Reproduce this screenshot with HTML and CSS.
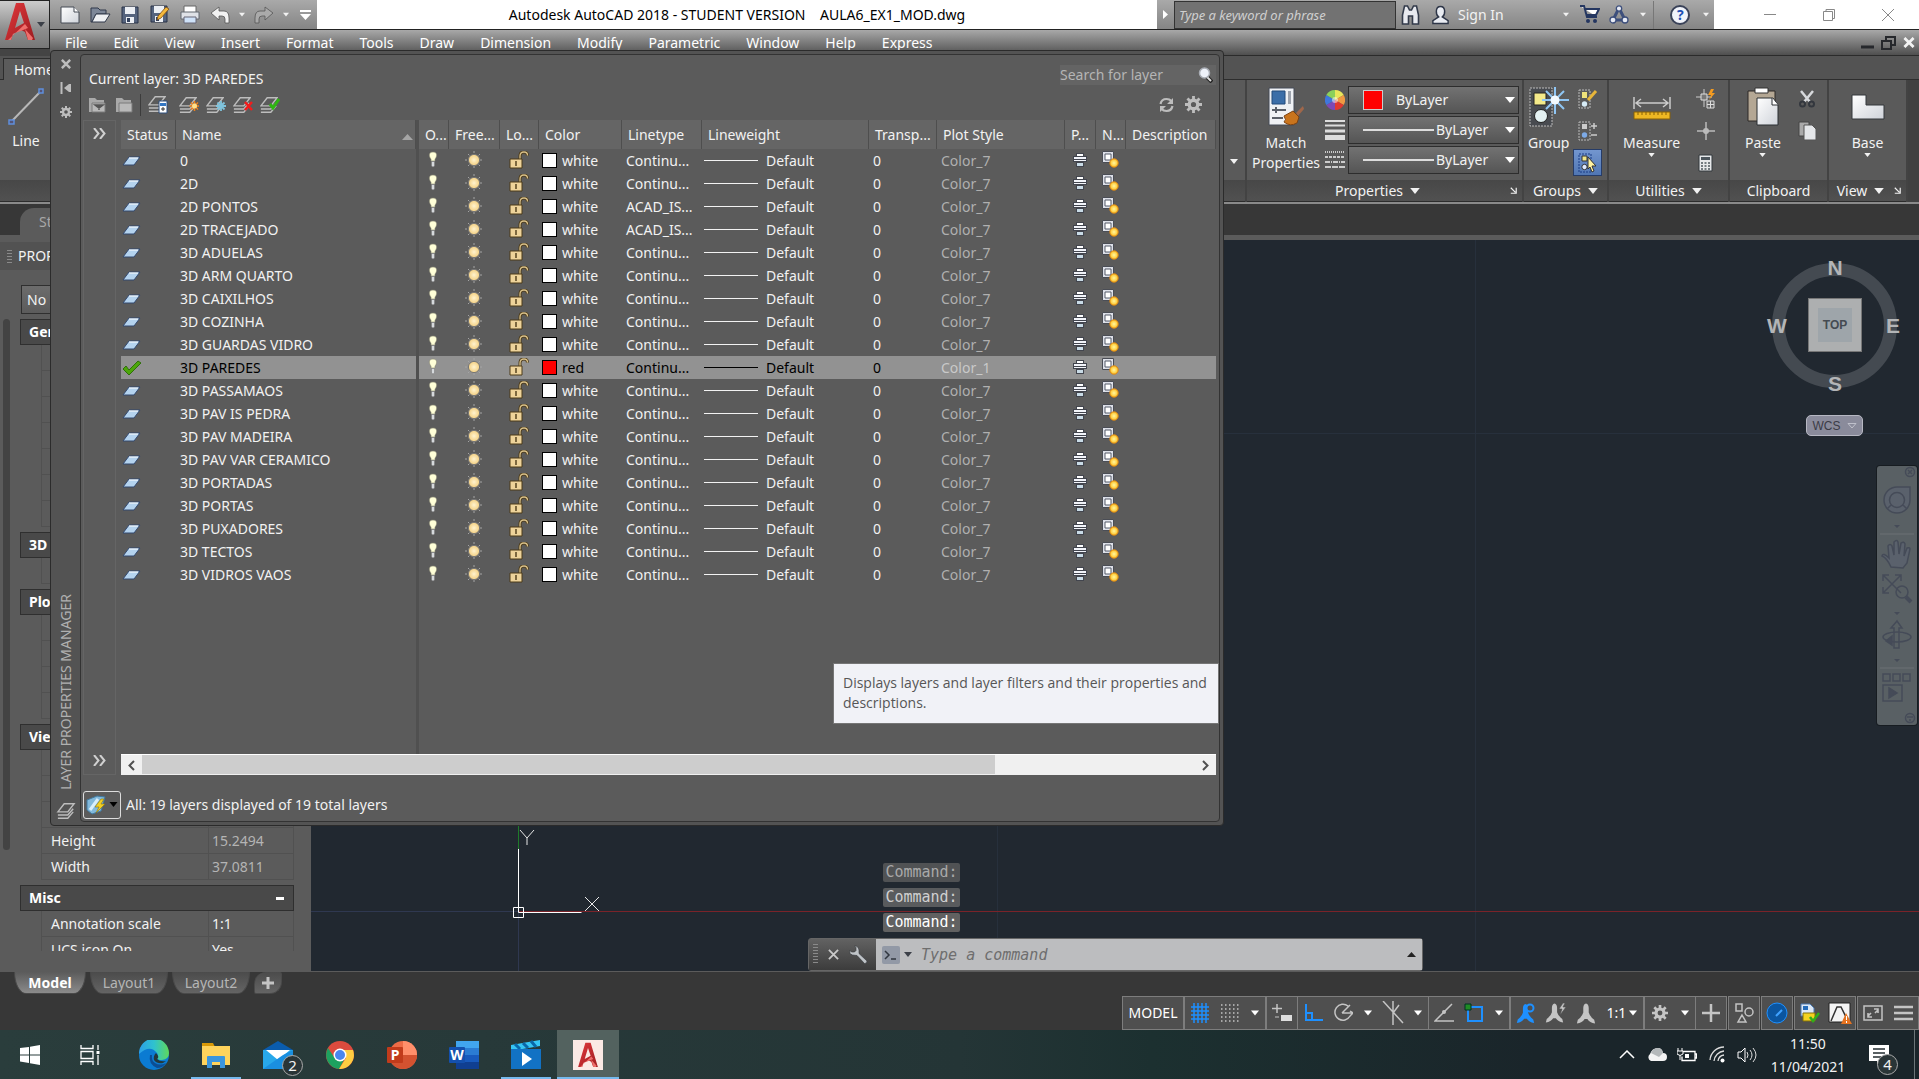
FILE: index.html
```html
<!DOCTYPE html>
<html lang="en">
<head>
    <meta charset="UTF-8">
    <meta name="viewport" content="width=device-width, initial-scale=1.0">
    <title>Autodesk AutoCAD 2018 - STUDENT VERSION</title>
    <link rel="stylesheet" href="styles.css">
</head>
<body>

    <!-- Shared icons -->
    <svg class="sprite" aria-hidden="true">
        <defs>
            <linearGradient id="gPaper" x1="0" y1="0" x2="1" y2="1"><stop offset="0" stop-color="#fff"/><stop offset="1" stop-color="#cfd3da"/></linearGradient>
            <radialGradient id="gSun"><stop offset="0" stop-color="#fff3cf"/><stop offset="1" stop-color="#f3cf80"/></radialGradient>
            <radialGradient id="gStar"><stop offset="0" stop-color="#fff7a0"/><stop offset="1" stop-color="#ffc020"/></radialGradient>
            <linearGradient id="gRed" x1="0" y1="0" x2="1" y2="1"><stop offset="0" stop-color="#e2383c"/><stop offset="1" stop-color="#9c1c20"/></linearGradient>
        </defs>
        <symbol id="i-down" viewBox="0 0 8 5"><path d="M0 0h8L4 5z" fill="currentColor"/></symbol>
        <symbol id="i-logo" viewBox="0 0 30 38"><path d="M0 38 11 1h8l11 37h-7l-3-8-4-2-8 4-2 6zM15 9l-5 17 9-5z" fill="url(#gRed)" fill-rule="evenodd"/><path d="M3 38 20 22l3 4-15 6-2 6zM20 27l8 9-1 2h-4z" fill="#ee6f6c"/></symbol>
        <symbol id="i-status" viewBox="0 0 20 10"><path d="M1 9 7 1h11l-6 8z" fill="#b4d3ef" stroke="#33496f"/><path d="M7 2h9" stroke="#fff"/></symbol>
        <symbol id="i-check" viewBox="0 0 20 16"><path d="m1 9 3-3 3 4 9-9 3 2L7 15z" fill="#4da60a" stroke="#2f6f0a"/></symbol>
        <symbol id="i-bulb" viewBox="0 0 10 17"><path d="M5 1c5 0 4 5 2 7v2H3V8C1 6 0 1 5 1z" fill="#ffffd8" stroke="#888672" stroke-width=".6"/><path d="M3.500 10.500h3V15l-1.500 1-1.500-1z" fill="#d6d9dc" stroke="#777" stroke-width=".5"/></symbol>
        <symbol id="i-sun" viewBox="0 0 18 18"><path d="M9 0v18M0 9h18M3 3l12 12M15 3 3 15" stroke="#a5a5a5" stroke-dasharray="2 1"/><circle cx="9" cy="9" r="5.600" fill="url(#gSun)" stroke="#777"/></symbol>
        <symbol id="i-lock" viewBox="0 0 20 18"><path d="M11 8V5q0-4 4-4 3.500 0 3.500 3.500" fill="none" stroke="#4c3a18" stroke-width="3"/><path d="M11 8V5q0-4 4-4 3.500 0 3.500 3.500" fill="none" stroke="#d8c08a" stroke-width="1.300"/><path d="M1 8h12v9H1z" fill="#eed39a" stroke="#4c3a18"/><path d="M7 10v5" stroke="#4c3a18" stroke-width="1.400"/></symbol>
        <symbol id="i-plot" viewBox="0 0 14 14"><path d="M3 0h8v3h3v6h-3v5H3V9H0V3h3z" fill="#42454e"/><path d="M4 1h6v2H4z" fill="#fff"/><path d="M1 4h12v2H1zM1 7h12v1H1z" fill="#f2f4fa"/><path d="M4 10h6v3H4z" fill="#c9dbe6"/></symbol>
        <symbol id="i-newvp" viewBox="0 0 17 17"><path d="M.5.500h11v11H.5z" fill="#dde0e8" stroke="#4a4d55"/><path d="M3 3h6v6H3z" fill="#fff" stroke="#555a68"/><circle cx="12" cy="12" r="4.200" fill="url(#gStar)" stroke="#d98516"/></symbol>
        <symbol id="i-x" viewBox="0 0 12 12"><path d="m1 1 10 10M11 1 1 11" stroke="currentColor" stroke-width="3"/></symbol>
        <symbol id="i-thinx" viewBox="0 0 12 12"><path d="m0 0 12 12M12 0 0 12" stroke="currentColor"/></symbol>
        <symbol id="i-gear" viewBox="0 0 18 18"><path d="M9 0v4M9 14v4M0 9h4M14 9h4M2.600 2.600l3 3M12.400 12.400l3 3M15.400 2.600l-3 3M5.600 12.400l-3 3" stroke="currentColor" stroke-width="3"/><circle cx="9" cy="9" r="4.500" fill="none" stroke="currentColor" stroke-width="3.500"/></symbol>
        <symbol id="i-chev" viewBox="0 0 13 11"><path d="m1 0 4.500 5.500L1 11M7 0l4.500 5.500L7 11" fill="none" stroke="currentColor" stroke-width="2"/></symbol>
        <symbol id="i-layers" viewBox="0 0 20 20"><path d="M1 11 8 2h11l-7 9zM1 14.500h11l6-7M1 18h11l6-7" fill="none" stroke="currentColor" stroke-width="1.600"/></symbol>
        <symbol id="i-folder" viewBox="0 0 18 16"><path d="M1 1h6l2 2h7v3H4v9H1z" fill="#a9a9a9"/><path d="M4 6h13v9H4z" fill="#b9b9b9" stroke="#7b7b7b"/></symbol>
        <symbol id="i-page" viewBox="0 0 20 18"><path d="M1 1h13l5 5v11H1z" fill="url(#gPaper)" stroke="#444a55"/><path d="M14 1v5h5" fill="#fff" stroke="#444a55"/></symbol>
        <symbol id="i-open" viewBox="0 0 21 17"><path d="M1 2h7l2 2h6v4H6l-4 8H1z" fill="#7d8798" stroke="#30394b"/><path d="M6 8h14l-5 8H2z" fill="#eef0f3" stroke="#30394b"/></symbol>
        <symbol id="i-save" viewBox="0 0 18 18"><path d="M1 1h16v16H1z" fill="#56647e" stroke="#283348"/><path d="M4 1h10v7H4zM5 11h8v6H5z" fill="#eceff4"/><path d="M6 12h3v4H6z" fill="#34425d"/></symbol>
        <symbol id="i-print" viewBox="0 0 20 19"><path d="M4 1h12v7H4z" fill="#fff" stroke="#666"/><path d="M1 7h18v7H1z" fill="#dfe2e7" stroke="#636870"/><path d="M4 12h12v6H4z" fill="#cfe2f8" stroke="#667"/></symbol>
        <symbol id="i-undo" viewBox="0 0 20 18"><path d="m1 7 8-6v4h5q5 0 5 7v5h-4v-4q0-3-3-3H9v4z" fill="currentColor" stroke="#555" stroke-width=".8"/></symbol>
        <symbol id="i-pair" viewBox="0 0 18 20"><path d="M3 1h3l2 4h2l2-4h3l2 9v9h-6v-8H7v8H1v-9z" fill="#e8eaf0" stroke="#333b4b" stroke-width="1.600"/></symbol>
        <symbol id="i-user" viewBox="0 0 20 20"><path d="M10 1c6 0 5 9 2 11l6 4v3H2v-3l6-4C5 10 4 1 10 1z" fill="#e9ecf2" stroke="#2d3547" stroke-width="1.500"/></symbol>
        <symbol id="i-cart" viewBox="0 0 20 19"><path d="M0 1h4l3 11h10M4 4h15l-3 6H6" fill="#fff" stroke="#243660" stroke-width="2"/><circle cx="8" cy="16" r="2" fill="#243660"/><circle cx="15" cy="16" r="2" fill="#243660"/></symbol>
        <symbol id="i-a360" viewBox="0 0 20 19"><path d="M10 3 4 15h12z" fill="none" stroke="#3d4f7c" stroke-width="3" stroke-linejoin="round"/><g fill="#e6eaf4" stroke="#3d4f7c" stroke-width="1.300"><circle cx="10" cy="3.500" r="2.700"/><circle cx="4" cy="15" r="3"/><circle cx="16" cy="15" r="3"/></g></symbol>
        <symbol id="i-person" viewBox="0 0 22 22"><path d="M11 0q3 1 3 5v5q1 4 6 8l1 4q-6-1-8.500-5h-3Q7 21 1 22l1-4q5-4 6-8V5q0-4 3-5z" fill="currentColor"/></symbol>
        <symbol id="i-bang" viewBox="0 0 9 9"><path d="M8 1v7H1M1 1l6 6" fill="none" stroke="currentColor" stroke-width="1.500"/></symbol>
    </svg>

    <header class="app-header">
        <button class="app-button" aria-label="Application menu">
            <svg width="30" height="40"><use href="#i-logo"/></svg>
            <svg class="dark" width="8" height="5"><use href="#i-down"/></svg>
        </button>
        <div class="titlebar">
            <div class="quick-access">
                <button aria-label="New"><svg width="20" height="18"><use href="#i-page"/></svg></button>
                <button aria-label="Open"><svg width="21" height="17"><use href="#i-open"/></svg></button>
                <button aria-label="Save"><svg width="18" height="18"><use href="#i-save"/></svg></button>
                <button aria-label="Save As"><svg width="21" height="19" viewBox="0 0 21 19"><use href="#i-save" width="18" height="18"/><path d="m8 11 8-9 3 2-8 9-4 2z" fill="#f5b93c" stroke="#7a4a12" stroke-width=".8"/></svg></button>
                <button aria-label="Plot"><svg width="20" height="19"><use href="#i-print"/></svg></button>
                <button aria-label="Undo"><svg width="20" height="18"><use href="#i-undo"/></svg></button>
                <button class="narrow" aria-label="Undo list"><svg width="6" height="5"><use href="#i-down"/></svg></button>
                <button class="off" aria-label="Redo"><svg class="flip" width="20" height="18"><use href="#i-undo"/></svg></button>
                <button class="narrow" aria-label="Redo list"><svg width="6" height="5"><use href="#i-down"/></svg></button>
                <button aria-label="Customize"><svg width="11" height="10" viewBox="0 0 11 10"><path d="M0 0h11v2H0zM0 4h11L5.500 10z" fill="#fff"/></svg></button>
            </div>
            <div class="doc-title">Autodesk AutoCAD 2018 - STUDENT VERSION    AULA6_EX1_MOD.dwg</div>
            <div class="info-center">
                <button class="info-toggle" aria-label="Collapse"><svg width="5" height="9" viewBox="0 0 5 9"><path d="M0 0v9l5-4.500z" fill="#fff"/></svg></button>
                <input type="text" aria-label="Search help" placeholder="Type a keyword or phrase">
                <button aria-label="Search"><svg width="19" height="20"><use href="#i-pair"/></svg></button>
                <button class="sign-in"><svg width="19" height="20"><use href="#i-user"/></svg>Sign In</button>
                <button class="narrow" aria-label="Account"><svg width="6" height="5"><use href="#i-down"/></svg></button>
                <button aria-label="App store"><svg width="20" height="19"><use href="#i-cart"/></svg></button>
                <button aria-label="A360"><svg width="20" height="19"><use href="#i-a360"/></svg></button>
                <button class="narrow" aria-label="A360 menu"><svg width="6" height="5"><use href="#i-down"/></svg></button>
                <span class="info-divider"></span>
                <button class="help" aria-label="Help"><span>?</span></button>
                <button class="narrow" aria-label="Help menu"><svg width="6" height="5"><use href="#i-down"/></svg></button>
            </div>
            <div class="window-buttons">
                <button aria-label="Minimize"><svg width="12" height="12" viewBox="0 0 12 12"><path d="M0 5.500h12" stroke="#888"/></svg></button>
                <button aria-label="Restore"><svg width="12" height="12" viewBox="0 0 12 12"><path d="M.5 2.500h9v9h-9zM3 2V.5h8.500v9H10" fill="none" stroke="#888"/></svg></button>
                <button aria-label="Close"><svg width="12" height="12"><use href="#i-thinx"/></svg></button>
            </div>
        </div>
        <nav class="menubar">
            <a href="#">File</a>
            <a href="#">Edit</a>
            <a href="#">View</a>
            <a href="#">Insert</a>
            <a href="#">Format</a>
            <a href="#">Tools</a>
            <a href="#">Draw</a>
            <a href="#">Dimension</a>
            <a href="#">Modify</a>
            <a href="#">Parametric</a>
            <a href="#">Window</a>
            <a href="#">Help</a>
            <a href="#">Express</a>
            <div class="doc-buttons">
                <button aria-label="Minimize drawing"><svg width="13" height="12" viewBox="0 0 13 12"><path d="M0 10h13" stroke="#26282c" stroke-width="3"/></svg></button>
                <button aria-label="Restore drawing"><svg width="15" height="14" viewBox="0 0 15 14"><path d="M5 4V1h9v8h-3" fill="none" stroke="#26282c" stroke-width="2"/><path d="M1 5h9v8H1z" fill="none" stroke="#26282c" stroke-width="2"/></svg></button>
                <button aria-label="Close drawing"><svg width="12" height="11"><use href="#i-x"/></svg></button>
            </div>
        </nav>
    </header>

    <div class="ribbon-tabs"><button class="ribbon-tab">Home</button></div>

    <section class="ribbon">
        <div class="panel panel-draw">
            <div class="panel-body">
                <button class="big-tool">
                    <svg width="36" height="38" viewBox="0 0 36 38"><path d="M3 35 33 4" stroke="#b8b8b8" stroke-width="2"/><path d="M1 33h5v4H1zM31 2h4v4h-4z" fill="#557" stroke="#5f8fdc" stroke-width="1.500"/></svg>
                    Line
                </button>
                <svg class="panel-more" width="8" height="5"><use href="#i-down"/></svg>
            </div>
            <div class="panel-title"></div>
        </div>
        <div class="panel panel-properties">
            <div class="panel-body">
                <button class="big-tool">
                    <svg width="38" height="40" viewBox="0 0 38 40"><path d="M2 1h25v37H2z" fill="#eff1f4" stroke="#444b57"/><path d="M5 4h13v13H5z" fill="#3b6ea8" stroke="#234a7a"/><path d="M21 4h3v13h-3z" fill="#9da3ad"/><path d="M5 23h14M9 20v6M5 31h11" stroke="#5a5f68" stroke-width="2"/><path d="m36 19-7 7 2 3 6-7z" fill="#a0674a"/><path d="m17 29 9-5 6 6-2 6q-7 4-13-1 3-2 0-6z" fill="#c9741d" stroke="#7e4311"/></svg>
                    Match<br>Properties
                </button>
                <div class="property-list">
                    <label for="prop-color"><svg width="20" height="20" viewBox="0 0 20 20"><path d="M10 10V0a10 10 0 0 1 8.700 5z" fill="#e9e65b"/><path d="m10 10 8.700-5a10 10 0 0 1 0 10z" fill="#ef9a43"/><path d="m10 10 8.700 5A10 10 0 0 1 10 20z" fill="#e1392e"/><path d="M10 10v10a10 10 0 0 1-8.700-5z" fill="#7d49b5"/><path d="m10 10-8.700 5a10 10 0 0 1 0-10z" fill="#3f77dc"/><path d="M10 10 1.300 5A10 10 0 0 1 10 0z" fill="#8bd05b"/><circle cx="10" cy="10" r="3" fill="#fff" opacity=".5"/></svg></label>
                    <div class="combo"><span class="swatch-red"></span><select id="prop-color"><option>ByLayer</option></select></div>
                    <label for="prop-weight"><svg width="20" height="20" viewBox="0 0 20 20"><path d="M0 1h20M0 5.500h20" stroke="#ddd" stroke-width="2"/><path d="M0 11h20" stroke="#ddd" stroke-width="3"/><path d="M0 17.500h20" stroke="#ddd" stroke-width="5"/></svg></label>
                    <div class="combo"><span class="combo-line"></span><select id="prop-weight"><option>ByLayer</option></select></div>
                    <label for="prop-type"><svg width="20" height="18" viewBox="0 0 20 18"><path d="M0 1h20" stroke="#ccc" stroke-width="2" stroke-dasharray="1 1"/><path d="M0 6h20" stroke="#ccc" stroke-width="2" stroke-dasharray="3 1"/><path d="M0 11h20" stroke="#ccc" stroke-width="2" stroke-dasharray="5 1 1 1"/><path d="M0 16h20" stroke="#ccc" stroke-width="2" stroke-dasharray="6 1"/></svg></label>
                    <div class="combo"><span class="combo-line"></span><select id="prop-type"><option>ByLayer</option></select></div>
                </div>
            </div>
            <div class="panel-title has-launcher">Properties <svg width="10" height="6"><use href="#i-down"/></svg><svg class="launcher" width="7" height="7"><use href="#i-bang"/></svg></div>
        </div>
        <div class="panel panel-groups">
            <div class="panel-body">
                <button class="big-tool">
                    <svg width="40" height="40" viewBox="0 0 40 40"><path d="M1 1h22v38H1z" fill="#484b50" stroke="#bbb" stroke-dasharray="2 1"/><path d="M5 6h12v12H5z" fill="#f3e98a" stroke="#222"/><circle cx="12" cy="29" r="6.500" fill="#e3f1f3" stroke="#222"/><path d="M26 0v27M13 13h27M17 4l18 18M35 4 17 22" stroke="#8fc6f5" stroke-width="2"/><circle cx="26" cy="13" r="4.500" fill="#f3faff"/></svg>
                    Group
                </button>
                <div class="small-tools">
                    <button aria-label="Ungroup"><svg width="20" height="20" viewBox="0 0 20 20"><path d="M1 1h11v18H1z" fill="none" stroke="#bbb" stroke-dasharray="2 1"/><path d="M4 3h5v6H4z" fill="#efe27a"/><circle cx="6.500" cy="15" r="2.700" fill="#d7ebf5"/><path d="m10 11 8-9" stroke="#e8b63a" stroke-width="3"/></svg></button>
                    <button aria-label="Group edit"><svg width="20" height="20" viewBox="0 0 20 20"><path d="M1 1h11v18H1z" fill="none" stroke="#bbb" stroke-dasharray="2 1"/><path d="M4 3h5v5H4z" fill="#ccc"/><circle cx="6.500" cy="14" r="2.700" fill="#7daae6"/><path d="M13 5h6M16 2v6M13 14h6" stroke="#ccc" stroke-width="1.500"/></svg></button>
                    <button class="active" aria-label="Group selection"><svg width="20" height="20" viewBox="0 0 20 20"><path d="M1 1h12v18H1z" fill="none" stroke="#1b3c86" stroke-dasharray="2 1"/><path d="M4 3h5v5H4z" fill="#f0e68a" stroke="#333"/><circle cx="6.500" cy="14" r="2.700" fill="#dce9ff" stroke="#333"/><path d="m10 4 8 9h-4l2 5-2 1-2-5-2 2z" fill="#fff2a0" stroke="#333"/></svg></button>
                </div>
            </div>
            <div class="panel-title">Groups <svg width="10" height="6"><use href="#i-down"/></svg></div>
        </div>
        <div class="panel panel-utilities">
            <div class="panel-body">
                <button class="big-tool">
                    <svg width="38" height="40" viewBox="0 0 38 40"><path d="M1 10v12M37 10v12M3 16h32M8 12l-5 4 5 4M30 12l5 4-5 4" fill="none" stroke="#ccc" stroke-width="1.500"/><path d="M1 25h36v7H1z" fill="#eeb823" stroke="#876008"/><path d="M5 25v3M9 25v3M13 25v3M17 25v3M21 25v3M25 25v3M29 25v3M33 25v3" stroke="#876008"/></svg>
                    Measure
                    <svg width="7" height="4"><use href="#i-down"/></svg>
                </button>
                <div class="small-tools">
                    <button aria-label="Quick select"><svg width="20" height="20" viewBox="0 0 20 20"><path d="M8 0v18M0 8h16" stroke="#ccc"/><path d="M5 5h6v6H5z" fill="#777" stroke="#ddd"/><path d="M11 12h7v7h-7zM14.500 12v7M11 15.500h7" fill="#666" stroke="#ddd"/><path d="m15 0-3 6h3l-2 5 6-7h-3l2-4z" fill="#f49b20"/></svg></button>
                    <button aria-label="Id point"><svg width="18" height="18" viewBox="0 0 18 18"><path d="M9 0v18M0 9h18" stroke="#bbb" stroke-width="1.500"/><circle cx="9" cy="9" r="3" fill="#bbb"/></svg></button>
                    <button aria-label="Calculator"><svg width="15" height="18" viewBox="0 0 15 18"><path d="M1 1h13v16H1z" fill="#e6e8ea" stroke="#33383d"/><path d="M3 3h9v3H3z" fill="#4c555c"/><path d="M3 9h9M3 12h9M3 15h9" stroke="#4c555c" stroke-width="1.500" stroke-dasharray="2 1.500"/></svg></button>
                </div>
            </div>
            <div class="panel-title">Utilities <svg width="10" height="6"><use href="#i-down"/></svg></div>
        </div>
        <div class="panel panel-clipboard">
            <div class="panel-body">
                <button class="big-tool">
                    <svg width="32" height="40" viewBox="0 0 32 40"><path d="M1 4h27v30H1z" fill="#b4a794" stroke="#2d2926"/><path d="M8 1h13v5H8z" fill="#fff" stroke="#333"/><path d="M10 11h16l5 7v20H10z" fill="url(#gPaper)" stroke="#2b2e33"/><path d="M25 11v7h6" fill="#fff" stroke="#2b2e33"/></svg>
                    Paste
                    <svg width="7" height="4"><use href="#i-down"/></svg>
                </button>
                <div class="small-tools">
                    <button aria-label="Cut"><svg width="18" height="18" viewBox="0 0 18 18"><path d="m3 1 9 11M15 1 6 12" stroke="#d7d9dc" stroke-width="2.500"/><circle cx="4.500" cy="14" r="2.500" fill="none" stroke="#33373e" stroke-width="2"/><circle cx="13.500" cy="14" r="2.500" fill="none" stroke="#33373e" stroke-width="2"/></svg></button>
                    <button aria-label="Copy"><svg width="19" height="20" viewBox="0 0 19 20"><path d="M1 1h10v14H1z" fill="#aaa" stroke="#444"/><path d="M6 4h8l4 4v11H6z" fill="#e4e6e9" stroke="#555"/></svg></button>
                </div>
            </div>
            <div class="panel-title">Clipboard</div>
        </div>
        <div class="panel panel-view">
            <div class="panel-body">
                <button class="big-tool">
                    <svg width="34" height="40" viewBox="0 0 34 40"><path d="M1 8h14v10h18v14H1z" fill="url(#gPaper)" stroke="#33363b"/></svg>
                    Base
                    <svg width="7" height="4"><use href="#i-down"/></svg>
                </button>
            </div>
            <div class="panel-title has-launcher">View <svg width="10" height="6"><use href="#i-down"/></svg><svg class="launcher" width="7" height="7"><use href="#i-bang"/></svg></div>
        </div>
    </section>

    <div class="file-tabs"><button class="file-tab">Start</button></div>

    <main class="workspace">
        <aside class="properties">
            <h2><span class="grip"></span>PROPERTIES</h2>
            <select class="selection" aria-label="Selection"><option>No selection</option></select>
            <div class="prop-scroll">
                <div class="prop-track"></div>
                <div class="prop-groups" id="propGroups"></div>
            </div>
        </aside>

        <section class="canvas">
            <svg class="drawing" width="100%" height="100%" aria-hidden="true">
                <path d="M686.500 0v736M1164.500 0v736" stroke="#27303c"/>
                <path d="M0 198.500h1608" stroke="#27303c"/>
                <path d="M207.500 676v60M0 676.500h207" stroke="#2f3850"/>
                <path d="M207.500 0v676" stroke="#1f7a2a"/>
                <path d="M207 676.500h1401" stroke="#7a2329"/>
                <path d="M207.500 614v63.500h63M202.500 672.500h10v10h-10z" fill="none" stroke="#fff"/>
                <path d="m209 595 7 8 7-8M216 603v7M274 662l14 14M288 662l-14 14" fill="none" stroke="#e8e8e8"/>
            </svg>

            <div class="viewcube">
                <svg width="125" height="125" viewBox="0 0 125 125"><circle cx="62.500" cy="62.500" r="56" fill="none" stroke="#444a51" stroke-width="13"/></svg>
                <span class="north">N</span><span class="south">S</span><span class="west">W</span><span class="east">E</span>
                <button class="cube-face"><span>TOP</span></button>
            </div>
            <button class="wcs">WCS <svg width="10" height="6" viewBox="0 0 10 6"><path d="M1 .5h8L5 5z" fill="none" stroke="#bfc0cb"/></svg></button>

            <div class="navbar">
                <svg width="40" height="259" viewBox="0 0 40 259" fill="none" stroke="#454b58" stroke-width="1.500">
                    <circle cx="33" cy="6" r="4.500"/><path d="m31 4 4 4m0-4-4 4"/>
                    <path d="M20 21h13v13a13 13 0 1 1-13-13z" fill="#5a616c"/><circle cx="20" cy="34" r="7.500"/><path d="m14 39-4 4M26 39l4 4"/>
                    <path d="M17 59h6l-3 3zM17 146h6l-3 3zM17 193h6l-3 3z" fill="#454b58" stroke="none"/>
                    <path d="M3 68h34M3 202h34" stroke="#656b6f"/>
                    <path d="M14 101q-4-9-9-11 1-4 7 2l-1-12q2-3 4 0l2 9v-13q3-3 4 0l1 12 2-11q3-2 4 1l-1 12 3-8q3-1 3 1l-3 14-4 5z" fill="#5a616c"/>
                    <path d="m6 109 18 18M24 109 6 127M6 115v-6h6M18 109h6v6M6 121v6h6"/><circle cx="25" cy="126" r="6"/><path d="m29 131 5 5" stroke-width="4"/>
                    <path d="M17 182v-20h-3l6-7 5 7h-3v20z"/><ellipse cx="20" cy="171" rx="14" ry="5"/><path d="m15 170-6 5 6 4z" fill="#454b58"/>
                    <path d="M6 208h7v7H6zM16 208h7v7h-7zM26 208h7v7h-7zM6 219h19v16H6z"/><path d="m12 222 8 5-8 5z" fill="#454b58"/>
                    <circle cx="33" cy="252" r="4.500"/><path d="M30 251h6M32 254h2"/>
                </svg>
            </div>

            <div class="command">
                <p class="history old">Command:</p>
                <p class="history mid">Command:</p>
                <p class="history">Command:</p>
                <div class="command-line">
                    <div class="command-tools">
                        <span class="grip"></span>
                        <button aria-label="Close command line"><svg width="11" height="11" viewBox="0 0 12 12"><path d="m1 1 10 10M11 1 1 11" stroke="#c9c9c9" stroke-width="2"/></svg></button>
                        <button aria-label="Customize"><svg width="19" height="19" viewBox="0 0 19 19"><path d="M5.500 1 7 2.500v3L5.500 7h-3L1 5.500Q0 9 3.500 10L8 10.500l7.500 8q2.500 0 2.500-2.500l-8-7.500V5Q9 .500 5.500 1z" fill="#c0c4c8" stroke="#33363a" stroke-width=".6"/></svg></button>
                    </div>
                    <div class="command-entry">
                        <svg width="18" height="18" viewBox="0 0 18 18"><rect width="18" height="18" rx="2" fill="#9299a6"/><path d="m3 5 4 4-4 4M9 13h5" fill="none" stroke="#30363f" stroke-width="1.500"/></svg>
                        <svg class="dark" width="8" height="5"><use href="#i-down"/></svg>
                        <input type="text" aria-label="Command" placeholder="Type a command">
                        <svg width="9" height="5" viewBox="0 0 9 5"><path d="M0 5h9L4.500 0z" fill="#222"/></svg>
                    </div>
                </div>
            </div>
        </section>
    </main>

    <!-- Layer properties manager palette -->
    <section class="layer-manager">
        <div class="palette-strip">
            <button aria-label="Close"><svg width="10" height="10"><use href="#i-x"/></svg></button>
            <button aria-label="Auto-hide"><svg width="11" height="12" viewBox="0 0 11 12"><path d="M1.500 0v12M10 2v8" stroke="currentColor" stroke-width="2"/><path d="m9 2-5 4 5 4z" fill="currentColor"/></svg></button>
            <button aria-label="Settings"><svg width="12" height="12"><use href="#i-gear"/></svg></button>
            <span class="palette-name">LAYER PROPERTIES MANAGER</span>
            <svg width="20" height="18"><use href="#i-layers"/></svg>
        </div>
        <div class="palette-body">
            <div class="palette-top">
                <span>Current layer: 3D PAREDES</span>
                <div class="layer-search"><input type="text" aria-label="Search for layer" placeholder="Search for layer"><svg width="15" height="16" viewBox="0 0 15 16"><path d="m9 10 5 5" stroke="#222" stroke-width="4"/><path d="m9 10 4 4" stroke="#ddd" stroke-width="2"/><circle cx="6.500" cy="6" r="5" fill="#eef2fa" stroke="#a9adb5" stroke-width="1.500"/></svg></div>
            </div>
            <div class="layer-tools">
                <button aria-label="New property filter"><svg width="18" height="16" viewBox="0 0 18 16"><use href="#i-folder"/><path d="M7 8h8l-4 3zM11 8v5" fill="#555" stroke="#555" stroke-width="1.500"/></svg></button>
                <button aria-label="New group filter"><svg width="18" height="16"><use href="#i-folder"/></svg></button>
                <span class="tool-divider"></span>
                <button class="states" aria-label="Layer states"><svg width="20" height="19" viewBox="0 0 20 19"><use href="#i-layers" width="18" height="18"/><path d="M11 6h8v12h-8z" fill="#fff" stroke="#2d4f7f"/><path d="M12 8h6v3h-6z" fill="#3477c4"/><path d="M13 14h4M15 12v4" stroke="#333"/></svg></button>
                <button aria-label="New layer"><svg width="20" height="18" viewBox="0 0 20 18"><use href="#i-layers" width="18" height="18"/><path d="M15.500 5v10M10.500 10h10M12 6.500l7 7m0-7-7 7" stroke="#f08017" stroke-width="1.500"/><circle cx="15.500" cy="10" r="2.500" fill="#ffe08a"/></svg></button>
                <button aria-label="New frozen layer"><svg width="20" height="18" viewBox="0 0 20 18"><use href="#i-layers" width="18" height="18"/><path d="M15 5v10M10 10h10M11.500 6.500l7 7m0-7-7 7" stroke="#7fc3dc" stroke-width="1.800"/></svg></button>
                <button aria-label="Delete layer"><svg width="20" height="18" viewBox="0 0 20 18"><use href="#i-layers" width="18" height="18"/><path d="m12 6 7 8M19 6l-7 8" stroke="#f21c1c" stroke-width="2.500"/></svg></button>
                <button aria-label="Set current"><svg width="20" height="18" viewBox="0 0 20 18"><use href="#i-layers" width="18" height="18"/><path d="m10 8 3 4 6-9" fill="none" stroke="#2fb512" stroke-width="3"/></svg></button>
                <button class="push" aria-label="Refresh"><svg width="15" height="16" viewBox="0 0 15 16"><path d="M1.500 7q1-5 6-5 3 0 5 2M13.500 9q-1 5-6 5-3 0-5-2" fill="none" stroke="currentColor" stroke-width="2.200"/><path d="M14 1v6H8zM1 15V9h6z" fill="currentColor"/></svg></button>
                <button aria-label="Layer settings"><svg width="17" height="17"><use href="#i-gear"/></svg></button>
            </div>
            <div class="layer-view">
                <div class="filter-pane">
                    <button aria-label="Expand filters"><svg width="13" height="11"><use href="#i-chev"/></svg></button>
                    <button aria-label="Expand filter tree"><svg width="13" height="11"><use href="#i-chev"/></svg></button>
                </div>
                <div class="layer-list">
                    <div class="table-area">
                        <table>
                            <colgroup>
                                <col class="c-status"><col class="c-name"><col class="c-on"><col class="c-freeze"><col class="c-lock"><col class="c-color"><col class="c-type"><col class="c-weight"><col class="c-transp"><col class="c-plotstyle"><col class="c-plot"><col class="c-new"><col>
                            </colgroup>
                            <thead>
                                <tr>
                                    <th>Status</th>
                                    <th>Name <svg width="11" height="6" viewBox="0 0 11 6"><path d="M0 6h11L5.500 0z" fill="#a5a5a5"/></svg></th>
                                    <th class="split">O...</th>
                                    <th>Free...</th>
                                    <th>Lo...</th>
                                    <th>Color</th>
                                    <th>Linetype</th>
                                    <th>Lineweight</th>
                                    <th>Transp...</th>
                                    <th>Plot Style</th>
                                    <th>P...</th>
                                    <th>N...</th>
                                    <th>Description</th>
                                </tr>
                            </thead>
                            <tbody id="layerRows"></tbody>
                        </table>
                        <div class="tooltip" role="tooltip">Displays layers and layer filters and their properties and descriptions.</div>
                    </div>
                    <div class="h-scroll">
                        <button aria-label="Scroll left"><svg width="7" height="11" viewBox="0 0 7 11"><path d="M6 1 1.500 5.500 6 10" fill="none" stroke="#505050" stroke-width="2"/></svg></button>
                        <div class="h-track"><div class="h-thumb"></div></div>
                        <button aria-label="Scroll right"><svg width="7" height="11" viewBox="0 0 7 11"><path d="m1 1 4.500 4.500L1 10" fill="none" stroke="#505050" stroke-width="2"/></svg></button>
                    </div>
                </div>
            </div>
            <div class="palette-footer">
                <button aria-label="Filter"><svg width="20" height="20" viewBox="0 0 20 20"><path d="M1 5 11 1l8 1-4 14-9 3-5-4z" fill="#82b9dc" stroke="#41799e"/><path d="m4 15 8-11" stroke="#d8eefb" stroke-width="3"/><path d="m15 4-6 8h4l-3 6 9-9h-4l3-5z" fill="#f1cf25" stroke="#8d7208" stroke-width=".6"/></svg><svg class="black" width="9" height="5"><use href="#i-down"/></svg></button>
                <span>All: 19 layers displayed of 19 total layers</span>
            </div>
        </div>
    </section>

    <footer class="bottom-bar">
        <div class="layout-tabs">
            <button class="layout-tab active">Model</button>
            <button class="layout-tab">Layout1</button>
            <button class="layout-tab">Layout2</button>
            <button class="layout-tab add" aria-label="New layout"><svg width="12" height="12" viewBox="0 0 12 12"><path d="M6 0v12M0 6h12" stroke="#c4c4c4" stroke-width="3"/></svg></button>
        </div>
        <div class="status-bar">
            <div class="status-group"><button class="model">MODEL</button></div>
            <div class="status-group">
                <button class="on" aria-label="Grid"><svg width="20" height="20" viewBox="0 0 20 20"><path d="M4 0v20M8 0v20M12 0v20M16 0v20M1 4h18M1 8h18M1 12h18M1 16h18" stroke="currentColor" stroke-width="1.500"/></svg></button>
                <button aria-label="Snap"><svg width="20" height="20" viewBox="0 0 20 20"><path d="M1 2h18M1 6h18M1 10h18M1 14h18M1 18h18" stroke="currentColor" stroke-width="1.500" stroke-dasharray="1.500 2.500"/></svg></button>
                <button class="arrow" aria-label="Snap options"><svg width="8" height="6"><use href="#i-down"/></svg></button>
            </div>
            <div class="status-group"><button aria-label="Dynamic input"><svg width="20" height="20" viewBox="0 0 20 20"><path d="M5 1v9M0 5.500h10" stroke="currentColor" stroke-width="1.500"/><path d="M9 12h11v6H9z" fill="#ddd"/><path d="M3 14h4" stroke="currentColor"/></svg></button></div>
            <div class="status-group joined">
                <button class="on" aria-label="Ortho"><svg width="19" height="18" viewBox="0 0 19 18"><path d="M2 0v16h17M2 9h6v7" fill="none" stroke="currentColor" stroke-width="2"/></svg></button>
                <button aria-label="Polar"><svg width="20" height="20" viewBox="0 0 20 20"><path d="M17 13a8 8 0 1 1-2-10M9 10h11M9 10l8-8M17 8l3 2-3 3" fill="none" stroke="currentColor" stroke-width="1.500"/></svg></button>
                <button class="arrow" aria-label="Polar options"><svg width="8" height="6"><use href="#i-down"/></svg></button>
                <button aria-label="Isometric"><svg width="22" height="24" viewBox="0 0 22 24"><path d="m1 0 20 22M11 0v24M11 12l6-8" stroke="currentColor" stroke-width="1.500"/></svg></button>
                <button class="arrow" aria-label="Isometric options"><svg width="8" height="6"><use href="#i-down"/></svg></button>
            </div>
            <div class="status-group joined">
                <button aria-label="Object snap tracking"><svg width="20" height="20" viewBox="0 0 20 20"><path d="M18 1 1 18h19" fill="none" stroke="currentColor" stroke-width="1.500"/><circle cx="10" cy="9" r="2" fill="currentColor"/></svg></button>
                <button class="on" aria-label="Object snap"><svg width="20" height="20" viewBox="0 0 20 20"><path d="M4 4h14v14H4z" fill="none" stroke="currentColor" stroke-width="2"/><path d="M1 1h6v6H1z" fill="#1f8c24" stroke="#032"/></svg></button>
                <button class="arrow" aria-label="Object snap options"><svg width="8" height="6"><use href="#i-down"/></svg></button>
            </div>
            <div class="status-group">
                <button class="on" aria-label="Annotation visibility"><svg width="21" height="21" viewBox="0 0 21 21"><use href="#i-person" width="19" height="21"/><circle cx="14" cy="5" r="3.500" fill="#4f4f4f" stroke="currentColor" stroke-width="2"/></svg></button>
                <button aria-label="Autoscale"><svg width="22" height="22" viewBox="0 0 22 22"><use href="#i-person" width="19" height="22"/><path d="m18 1-4 6h3l-2 6 6-8h-3l2-4z" fill="currentColor" stroke="#4f4f4f" stroke-width=".6"/></svg></button>
                <button aria-label="Annotation scale"><svg width="20" height="21"><use href="#i-person"/></svg></button>
                <button class="scale">1:1 <svg width="8" height="6"><use href="#i-down"/></svg></button>
            </div>
            <div class="status-group">
                <button aria-label="Workspace"><svg width="16" height="16"><use href="#i-gear"/></svg></button>
                <button class="arrow" aria-label="Workspace options"><svg width="8" height="6"><use href="#i-down"/></svg></button>
            </div>
            <div class="status-group joined"><button aria-label="Annotation monitor"><svg width="18" height="18" viewBox="0 0 18 18"><path d="M9 0v18M0 9h18" stroke="currentColor" stroke-width="2.500"/></svg></button></div>
            <div class="status-group spaced"><button aria-label="Isolate objects"><svg width="20" height="20" viewBox="0 0 20 20"><path d="M2 1h6v7H2zM8 12l4 7H4z" fill="none" stroke="currentColor" stroke-width="1.500"/><circle cx="15" cy="9" r="4" fill="none" stroke="currentColor" stroke-width="1.500"/></svg></button></div>
            <div class="status-group spaced"><button aria-label="Graphics performance"><svg width="22" height="22" viewBox="0 0 22 22"><circle cx="11" cy="11" r="10" fill="#0b559f" stroke="#1e90ff"/><path d="m10 14 6-6" stroke="#3fa2ff" stroke-width="2"/></svg></button></div>
            <div class="status-group spaced">
                <button aria-label="Standards"><svg width="20" height="20" viewBox="0 0 20 20"><path d="M1 1h9l4 4v8H1z" fill="#dce8f6" stroke="#4a79b1"/><path d="M3 10h12v8H3z" fill="#f4d21e" stroke="#82700b"/><path d="M3 3h5v4H3z" fill="#246cbb"/><path d="m10 14 3 4 6-8" fill="none" stroke="#2fae1b" stroke-width="2.500"/></svg></button>
                <button aria-label="Plot details"><svg width="24" height="22" viewBox="0 0 24 22"><path d="M1 1h21v19H1z" fill="#f4f4f4" stroke="#222"/><path d="M3 19 9 5h4l6 12" fill="none" stroke="#333" stroke-width="1.500"/><path d="m18 11 6 11H13z" fill="#e57320"/><path d="M18.500 14v4M18.500 19v2" stroke="#fff"/></svg></button>
            </div>
            <div class="status-group spaced">
                <button aria-label="Clean screen"><svg width="20" height="16" viewBox="0 0 20 16"><path d="M1 1h18v14H1z" fill="none" stroke="currentColor" stroke-width="1.500"/><path d="m5 11 3-3M15 5l-3 3M5 8v4h4M11 4h4v4" fill="none" stroke="currentColor" stroke-width="1.600"/></svg></button>
                <button aria-label="Customization"><svg width="19" height="16" viewBox="0 0 19 16"><path d="M0 2h19M0 8h19M0 14h19" stroke="currentColor" stroke-width="2.500"/></svg></button>
            </div>
        </div>
    </footer>

    <footer class="taskbar">
        <button aria-label="Start"><svg width="20" height="20" viewBox="0 0 20 20"><path d="M0 3 9 2v7.500H0zM10 1.800 20 0v9.500H10zM0 10.500h9V18l-9-1.500zM10 10.500h10V20l-10-1.800z" fill="#fff"/></svg></button>
        <button class="task-view" aria-label="Task view"><svg width="20" height="20" viewBox="0 0 20 20"><path d="M1 0v3.500h12V0M1 6.500h12v7H1zM1 20v-3.500h12V20M18 0v5M18 10v10" fill="none" stroke="#fff" stroke-width="1.300"/><path d="M16.500 6h3v3h-3z" fill="#fff"/></svg></button>
        <button aria-label="Edge"><svg width="30" height="30" viewBox="0 0 30 30"><defs><linearGradient id="gEdge" x1="0" x2="1"><stop stop-color="#2b9fe8"/><stop offset=".5" stop-color="#2fc2cf"/><stop offset="1" stop-color="#5fd95a"/></linearGradient></defs><circle cx="15" cy="15" r="15" fill="#0b7bd2"/><path d="M0 14A15 15 0 0 1 30 13q0 6-7 7-5 0-5-2 2-2 0-5Q11 4 0 14z" fill="url(#gEdge)"/><path d="M11 15q-2 9 7 13 6 0 9-5-6 3-11 0-4-3-3-8z" fill="#0c4d93"/><path d="M17 13q4 4 1 6 3 3 9 2l-3 2q-6 1-9-3-1-4 2-7z" fill="#25383a"/></svg></button>
        <button class="running" aria-label="File Explorer"><svg width="28" height="28" viewBox="0 0 28 28"><path d="M0 2h11l2 4H0z" fill="#d99a08"/><path d="M0 5h28v19H0z" fill="#ffd45c"/><path d="M5 27V16q0-1 1-1h16q1 0 1 1v11h-5v-6h-8v6z" fill="#3b96dd"/></svg></button>
        <button class="badged" aria-label="Mail"><svg width="30" height="28" viewBox="0 0 30 28"><path d="m0 9 15-9 15 9z" fill="#0a5cad"/><path d="M0 9h30v19H0z" fill="#28a8ea"/><path d="M3 9h24L15 19z" fill="#fff"/><path d="m0 28 20-14 10-5v19z" fill="#1a8fe0"/></svg><span class="badge">2</span></button>
        <button aria-label="Chrome"><svg width="28" height="28" viewBox="0 0 28 28"><circle cx="14" cy="14" r="14" fill="#dd4b3e"/><path d="M2 7a14 14 0 0 0 11 21l6-11-9 2z" fill="#1da15f"/><path d="M13 28A14 14 0 0 0 27 9H14l6 8z" fill="#ffcd41"/><circle cx="14" cy="14" r="6.500" fill="#fff"/><circle cx="14" cy="14" r="5" fill="#4a86ee"/></svg></button>
        <button aria-label="PowerPoint"><svg width="30" height="28" viewBox="0 0 30 28"><circle cx="16" cy="14" r="14" fill="#ed6c47"/><path d="M16 0a14 14 0 0 1 14 14H16z" fill="#ff8f6b"/><path d="M2 14h28a14 14 0 0 1-28 0z" fill="#d35230"/><rect y="6" width="16" height="16" rx="1" fill="#c13b1b"/><text x="8" y="19" text-anchor="middle" class="tile-letter">P</text></svg></button>
        <button aria-label="Word"><svg width="30" height="28" viewBox="0 0 30 28"><path d="M7 0h23v7H7z" fill="#41a5ee"/><path d="M7 7h23v7H7z" fill="#2b7cd3"/><path d="M7 14h23v7H7z" fill="#185abd"/><path d="M7 21h23v7H7z" fill="#103f91"/><rect y="6" width="16" height="16" rx="1" fill="#1450ad"/><text x="8" y="19" text-anchor="middle" class="tile-letter">W</text></svg></button>
        <button class="running" aria-label="Movies"><svg width="30" height="30" viewBox="0 0 30 30"><path d="M0 5 29 0v6L0 11z" fill="#36c5f4"/><path d="m4 4 5 5M12 3l5 5M20 1l5 6" stroke="#0a67a8" stroke-width="3"/><path d="M0 9h30v20H0z" fill="#1272c4"/><path d="m11 12 10 7-10 7z" fill="#fff"/></svg></button>
        <button class="running current" aria-label="AutoCAD"><svg width="30" height="30" viewBox="0 0 30 30"><path d="M0 0h30v30H0z" fill="#fbe9e4"/><use href="#i-logo" x="5" y="2" width="20" height="25"/></svg></button>

        <div class="tray">
            <button aria-label="Hidden icons"><svg width="16" height="9" viewBox="0 0 16 9"><path d="m1 8 7-7 7 7" fill="none" stroke="#fff" stroke-width="1.500"/></svg></button>
            <button aria-label="OneDrive"><svg width="20" height="13" viewBox="0 0 20 13"><path d="M4 13a4 4 0 0 1-1-7q2-6 8-6 4 0 5 5a4 4 0 0 1 0 8z" fill="#f3f3f3"/><path d="m4 5 8 4 4-4q-1-5-5-5-5 0-7 5z" fill="#b4b8ba"/></svg></button>
            <button aria-label="Battery"><svg width="20" height="14" viewBox="0 0 20 14"><path d="M5 3.500h13v9H5v-4M18 6h1.500v4H18" fill="none" stroke="#fff" stroke-width="1.300"/><path d="M8 6h4v4H8z" fill="#fff"/><path d="M1 0v3M5 0v3M0 3h6v3L3 7.500 0 6zM3 7v5" stroke="#fff" fill="#20292d"/></svg></button>
            <button aria-label="Wi-Fi"><svg width="17" height="17" viewBox="0 0 17 17"><path d="M1 14A14 14 0 0 1 15 1M5 15A11 11 0 0 1 15 5M9 15a7 7 0 0 1 6-6" fill="none" stroke="#ddd" stroke-width="1.300"/><circle cx="13.500" cy="14.500" r="2" fill="#fff"/></svg></button>
            <button aria-label="Volume"><svg width="20" height="16" viewBox="0 0 20 16"><path d="M1 5h3l4-4v14l-4-4H1z" fill="none" stroke="#fff"/><path d="M10 5q2 3 0 6M13 3q4 5 0 10M16 1q6 7 0 14" fill="none" stroke="#ddd"/></svg></button>
            <div class="clock"><span>11:50</span><span>11/04/2021</span></div>
            <button class="action-center badged" aria-label="Notifications"><svg width="20" height="20" viewBox="0 0 20 20"><path d="M0 0h20v16H11l-3 4v-4H0z" fill="#fff"/><path d="M4 4h12M4 8h12M4 12h8" stroke="#232d31" stroke-width="1.300"/></svg><span class="badge">4</span></button>
            <span class="show-desktop"></span>
        </div>
    </footer>

    <script src="script.js"></script>
</body>
</html>
```

FILE: styles.css
```css
* {
    box-sizing: border-box;
}

body {
    margin: 0;
    height: 100vh;
    display: flex;
    flex-direction: column;
    overflow: hidden;
    position: relative;
    font-family: "Noto Sans", "Open Sans", sans-serif;
    font-size: 14px;
    line-height: 20px;
    color: #f2f2f2;
    background-color: #373737;
}

button {
    display: flex;
    align-items: center;
    justify-content: center;
    padding: 0;
    border: none;
    background: none;
    color: inherit;
    font: inherit;
}

input, select {
    font: inherit;
    color: inherit;
    border: none;
    background: none;
    padding: 0;
    min-width: 0;
    appearance: none;
}

svg {
    flex: none;
}

.sprite {
    position: absolute;
    width: 0;
    height: 0;
}

.dark {
    color: #3c4048;
}

.black {
    color: #000;
}

/* Title bar and menus */
.app-header {
    display: grid;
    grid-template-columns: 50px 1fr;
    grid-template-rows: 30px 26px;
    flex: none;
    background-color: #444;
}

.app-button {
    grid-row: 1 / 3;
    height: 49px;
    align-items: flex-start;
    gap: 2px;
    border: 1px solid #222;
    border-left: none;
    background: linear-gradient(#ccc, #8e8e8e 60%, #777);
}

.app-button .dark {
    margin-top: 21px;
}

.titlebar {
    display: flex;
    background-color: #fff;
    border-bottom: 1px solid #222;
}

.quick-access, .info-center {
    display: flex;
    background: linear-gradient(#a9a9a9, #858585);
}

.quick-access {
    width: 267px;
    padding-left: 5px;
}

.quick-access button {
    width: 30px;
}

.quick-access .narrow {
    width: 14px;
}

.quick-access .off {
    color: #aaa;
}

.quick-access button:last-child {
    width: 24px;
}

.flip {
    transform: scaleX(-1);
}

.doc-title {
    flex: 1;
    color: #000;
    text-align: center;
    white-space: pre;
    line-height: 30px;
}

.info-center {
    width: 557px;
    align-items: center;
}

.info-center button {
    width: 29px;
    height: 28px;
}

.info-center .info-toggle {
    width: 17px;
}

.info-center input {
    width: 224px;
    height: 28px;
    padding-left: 4px;
    border: 1px solid #333;
    background-color: #727272;
    font-style: italic;
    font-size: 13px;
}

.info-center input::placeholder {
    color: #cfcfcf;
}

.info-center .sign-in {
    width: 132px;
    justify-content: flex-start;
    gap: 8px;
    padding-left: 6px;
}

.info-center .narrow {
    width: 20px;
}

.info-divider {
    width: 1px;
    height: 28px;
    background-color: #777;
}

.help span {
    width: 20px;
    height: 20px;
    border: 2px solid #3a4258;
    border-radius: 50%;
    background-color: #f0f3fa;
    color: #1d4fb4;
    font-weight: bold;
    line-height: 16px;
}

.info-center .help {
    width: 44px;
    padding-left: 8px;
}

.info-center .help + .narrow {
    width: 16px;
}

.window-buttons {
    display: flex;
    width: 205px;
    padding-left: 26px;
    color: #888;
}

.window-buttons button {
    width: 59px;
}

.menubar {
    display: flex;
    align-items: center;
    gap: 26px;
    padding-left: 15px;
    background: linear-gradient(#a8a8a8, #4f4f4f);
    border-bottom: 1px solid #2b2b2b;
}

.menubar a {
    color: #fff;
    text-decoration: none;
}

.doc-buttons {
    display: flex;
    gap: 7px;
    margin-left: auto;
    padding-right: 4px;
}

/* Ribbon */
.ribbon-tabs {
    flex: none;
    height: 24px;
    padding: 2px 0 0 3px;
    background-color: #535353;
    border-bottom: 1px solid #2d2d2d;
}

.ribbon-tab {
    width: 70px;
    height: 22px;
    justify-content: flex-start;
    padding-left: 10px;
    border: 1px solid #2d2d2d;
    border-bottom: none;
    background-color: #5b5b5b;
}

.ribbon {
    flex: none;
    display: flex;
    height: 124px;
    padding-right: 11px;
    border-bottom: 2px solid #8a8a8a;
    background-color: #414141;
}

.panel {
    display: flex;
    flex-direction: column;
    border-right: 2px solid #434343;
    background-color: #5a5a5a;
}

.panel-draw {
    flex: 1;
}

.panel-properties {
    width: 277px;
}

.panel-groups {
    width: 85px;
}

.panel-utilities {
    width: 121px;
}

.panel-clipboard {
    width: 99px;
}

.panel-view {
    width: 79px;
}

.panel-body {
    flex: 1;
    display: flex;
    align-items: flex-start;
    padding-top: 7px;
}

.panel-draw .panel-body {
    justify-content: space-between;
    padding-left: 8px;
    padding-right: 7px;
}

.panel-more {
    margin-top: 72px;
}

.panel-title {
    display: flex;
    align-items: center;
    justify-content: center;
    gap: 7px;
    height: 22px;
    border-bottom: 1px solid #2c2c2c;
    background: linear-gradient(#474747, #515151);
    position: relative;
}

.panel-title.has-launcher {
    padding-right: 14px;
}

.launcher {
    position: absolute;
    right: 5px;
    top: 7px;
}

.big-tool {
    display: block;
    text-align: center;
}

.big-tool svg {
    display: block;
    margin: 0 auto 6px;
}

.panel-properties .big-tool {
    width: 78px;
}

.property-list {
    display: grid;
    grid-template-columns: 20px 171px;
    align-items: center;
    gap: 2px 3px;
    margin-top: -1px;
}

.property-list label {
    display: flex;
}

.combo {
    position: relative;
    display: flex;
    align-items: center;
    height: 28px;
    padding: 0 14px;
    border: 1px solid #2d2d2d;
    background: linear-gradient(#727272, #555);
}

.combo::after {
    content: "";
    position: absolute;
    right: 3px;
    top: 10px;
    border: 5px solid transparent;
    border-top: 6px solid #fff;
    border-bottom: none;
}

.combo select {
    flex: 1;
    margin-left: 13px;
}

.combo-line {
    width: 71px;
    height: 2px;
    background-color: #ddd;
}

.combo-line + select {
    margin-left: 2px;
}

.swatch-red {
    width: 20px;
    height: 20px;
    border: 1px solid #ccc;
    background-color: #f00;
}

.small-tools {
    display: flex;
    flex-direction: column;
    align-items: center;
    gap: 5px;
}

.small-tools button {
    width: 29px;
    height: 27px;
}

.small-tools .active {
    border: 1px solid #263c68;
    background: linear-gradient(#7396cf, #5076b3);
}

.panel-groups .panel-body {
    padding-left: 4px;
    gap: 4px;
}

.panel-utilities .panel-body {
    padding-left: 14px;
    gap: 11px;
}

.panel-clipboard .panel-body {
    padding-left: 15px;
    gap: 12px;
}

.panel-view .panel-body {
    justify-content: center;
}

.panel-groups .small-tools, .panel-utilities .small-tools, .panel-clipboard .small-tools {
    margin-top: -2px;
}

.file-tabs {
    flex: none;
    height: 31px;
    padding: 4px 0 0 20px;
}

.file-tab {
    width: 110px;
    height: 27px;
    justify-content: flex-start;
    padding-left: 19px;
    border-radius: 14px 14px 0 0;
    background-color: #5b5b5b;
    color: #a8a8a8;
}

/* Workspace */
.workspace {
    flex: 1;
    min-height: 0;
    display: flex;
    border-top: 5px solid #5b5b5b;
}

.properties {
    width: 311px;
    display: flex;
    flex-direction: column;
    padding-bottom: 20px;
    background-color: #5b5b5b;
}

.properties h2 {
    flex: none;
    display: flex;
    align-items: center;
    gap: 6px;
    height: 28px;
    margin: 2px 0 15px;
    padding-left: 7px;
    background-color: #525252;
    font-size: 14px;
    font-weight: normal;
}

.grip {
    width: 5px;
    height: 13px;
    background: repeating-linear-gradient(#8a8a8a 0 1px, transparent 1px 3px);
}

.selection {
    flex: none;
    width: 230px;
    height: 29px;
    margin: 0 0 5px 21px;
    padding-left: 5px;
    border: 1px solid #2f2f2f;
    background: linear-gradient(#6c6c6c, #5b5b5b);
}

.prop-scroll {
    flex: 1;
    min-height: 0;
    display: flex;
    overflow: hidden;
}

.prop-track {
    width: 7px;
    height: 531px;
    margin: 0 10px 0 3px;
    border-radius: 4px;
    background-color: #434343;
}

.prop-groups {
    width: 274px;
}

.prop-group {
    margin-bottom: 5px;
}

.prop-group h3 {
    display: flex;
    align-items: center;
    justify-content: space-between;
    height: 26px;
    margin: 0;
    padding: 0 9px 0 8px;
    border: 1px solid #2f2f2f;
    background-color: #494949;
    font-size: 14px;
    color: #fff;
}

.prop-group h3::after {
    content: "";
    width: 8px;
    height: 3px;
    background-color: #fff;
}

.prop-row {
    display: grid;
    grid-template-columns: 166px 1fr;
    height: 26px;
    margin-left: 21px;
    border: 1px solid #515151;
    border-top: none;
    line-height: 26px;
}

.prop-row span {
    padding-left: 9px;
}

.prop-row span + span {
    padding-left: 3px;
    border-left: 1px solid #515151;
}

.prop-row .readonly {
    color: #b4b4b4;
}

.canvas {
    flex: 1;
    position: relative;
    overflow: hidden;
    background-color: #212830;
}

.drawing {
    position: absolute;
    left: 0;
    top: -5px;
    height: 736px;
}

.viewcube {
    position: absolute;
    right: 22px;
    top: 23px;
    width: 125px;
    height: 125px;
    font-family: "Liberation Sans", sans-serif;
    font-size: 21px;
    font-weight: bold;
    color: #b3b5b7;
}

.viewcube > span {
    position: absolute;
    width: 24px;
    text-align: center;
}

.north {
    left: 51px;
    top: -5px;
}

.south {
    left: 51px;
    top: 111px;
}

.west {
    left: -7px;
    top: 53px;
}

.east {
    left: 109px;
    top: 53px;
}

.cube-face {
    position: absolute;
    left: 36px;
    top: 35px;
    width: 54px;
    height: 54px;
    border: 1px solid #777;
    background-color: #adafb0;
}

.cube-face span {
    width: 34px;
    background-color: #9ea5aa;
    color: #454b52;
    font-size: 12px;
    line-height: 34px;
}

.wcs {
    position: absolute;
    right: 56px;
    top: 175px;
    width: 57px;
    height: 21px;
    gap: 6px;
    border: 1px solid #b7b8c3;
    border-radius: 5px;
    background-color: #8a8b9b;
    color: #3b3c46;
    font-family: "Liberation Sans", sans-serif;
    font-size: 12px;
}

.navbar {
    position: absolute;
    right: 2px;
    top: 226px;
    height: 259px;
    border-radius: 3px;
    box-shadow: 0 0 0 1px #171c21;
    background-color: #596064;
}

.command {
    position: absolute;
    left: 497px;
    bottom: 0;
    width: 615px;
    font-family: "DejaVu Sans Mono", monospace;
    font-size: 15px;
}

.history {
    width: 77px;
    height: 19px;
    margin: 0 0 6px 75px;
    border-radius: 2px;
    background-color: #616161;
    color: #fff;
    text-align: center;
    line-height: 19px;
}

.history.mid {
    background-color: #595b5d;
    color: #d0d0d0;
}

.history.old {
    background-color: #505254;
    color: #a9a9a9;
}

.command-line {
    display: flex;
    height: 33px;
    border: 1px solid #666;
    border-radius: 3px;
}

.command-tools {
    display: flex;
    align-items: center;
    gap: 10px;
    width: 67px;
    padding-left: 4px;
    background: linear-gradient(#626262, #3c3c3c);
}

.command-tools .grip {
    height: 21px;
}

.command-entry {
    flex: 1;
    display: flex;
    align-items: center;
    gap: 4px;
    padding: 0 6px;
    background-color: #bcbdbf;
}

.command-entry input {
    flex: 1;
    margin-left: 5px;
    font-style: italic;
}

.command-entry input::placeholder {
    color: #6e6e6e;
}

/* Layer properties manager */
.layer-manager {
    position: absolute;
    left: 50px;
    top: 50px;
    width: 1174px;
    height: 776px;
    display: flex;
    padding: 3px 3px 3px 0;
    border: 1px solid #2b2b2b;
    border-radius: 4px;
    background-color: #535353;
}

.palette-strip {
    width: 29px;
    display: flex;
    flex-direction: column;
    align-items: center;
    gap: 12px;
    padding: 4px 0 2px;
    color: #bdbdbd;
}

.palette-strip button {
    height: 12px;
}

.palette-name {
    margin-top: auto;
    writing-mode: vertical-rl;
    transform: rotate(180deg);
    color: #b0b0b0;
}

.palette-body {
    flex: 1;
    display: flex;
    flex-direction: column;
    padding: 0 3px 2px 2px;
    border: 1px solid #333;
    border-radius: 4px;
    background-color: #5b5b5b;
}

.palette-top {
    display: flex;
    justify-content: space-between;
    padding: 9px 0 0 6px;
}

.palette-top > span {
    padding-top: 5px;
}

.layer-search {
    display: flex;
    align-items: center;
    gap: 4px;
    width: 156px;
    height: 20px;
    margin-top: 1px;
    padding-right: 3px;
    background-color: #646464;
}

.layer-search input {
    flex: 1;
}

.layer-search input::placeholder {
    color: #b5b5b5;
}

.layer-tools {
    display: flex;
    align-items: center;
    height: 31px;
    padding-right: 9px;
    color: #bdbdbd;
}

.layer-tools button {
    width: 27px;
}

.tool-divider {
    width: 1px;
    height: 22px;
    margin-left: 3px;
    background-color: #3c3c3c;
}

.layer-tools .states {
    width: 34px;
}

.layer-tools .push {
    margin-left: auto;
}

.layer-view {
    flex: 1;
    min-height: 0;
    display: flex;
    gap: 5px;
}

.filter-pane {
    width: 33px;
    display: flex;
    flex-direction: column;
    align-items: center;
    justify-content: space-between;
    padding: 7px 0 8px;
    border: 1px solid #656565;
    color: #d0d0d0;
}

.layer-list {
    flex: 1;
    display: flex;
    flex-direction: column;
}

.table-area {
    flex: 1;
    position: relative;
    background: linear-gradient(90deg, transparent 295px, #505050 295px 298px, transparent 298px);
}

table {
    width: 100%;
    table-layout: fixed;
    border-collapse: separate;
    border-spacing: 0;
}

.c-status { width: 55px; }
.c-name { width: 240px; }
.c-on { width: 33px; }
.c-freeze { width: 51px; }
.c-lock { width: 39px; }
.c-color { width: 83px; }
.c-type { width: 80px; }
.c-weight { width: 167px; }
.c-transp { width: 68px; }
.c-plotstyle { width: 128px; }
.c-plot { width: 31px; }
.c-new { width: 30px; }

th, td {
    padding: 0;
    text-align: left;
    font-weight: normal;
    white-space: nowrap;
    overflow: hidden;
}

th {
    height: 29px;
    padding-left: 6px;
    border-right: 1px solid #4e4e4e;
    background-color: #656565;
}

th svg {
    float: right;
    margin: 9px 2px 0 0;
}

td {
    height: 23px;
    padding-left: 4px;
    line-height: 22px;
}

td svg {
    display: block;
}

td.icon-cell {
    padding: 0 2px 2px 0;
}

td.icon-cell svg {
    margin: 0 auto;
}

td.status-cell {
    padding-left: 1px;
}

th.split, td.split {
    border-left: 3px solid #505050;
}

.cell-line {
    display: flex;
    align-items: center;
    margin-left: -1px;
}

.swatch {
    width: 15px;
    height: 15px;
    margin-right: 5px;
    border: 1px solid #000;
    background-color: #fff;
}

.swatch.red {
    background-color: #f00;
}

.weight-line {
    width: 54px;
    height: 1px;
    margin: 0 8px 0 -1px;
    background-color: currentColor;
}

.plot-style {
    color: #b0b0b0;
}

.selected td {
    background-color: #929292;
    color: #000;
}

.selected .plot-style {
    color: #c9c9c9;
}

.tooltip {
    position: absolute;
    right: -3px;
    bottom: 30px;
    width: 386px;
    height: 61px;
    padding: 9px 0 0 9px;
    border: 1px solid #767676;
    background-color: #f1f2f7;
    color: #565656;
    font-family: "Open Sans", sans-serif;
}

.h-scroll {
    display: flex;
    height: 21px;
    border-top: 1px solid #fff;
    background-color: #f0f0f0;
}

.h-scroll button {
    width: 21px;
}

.h-track {
    flex: 1;
    padding-bottom: 1px;
}

.h-thumb {
    width: 81%;
    height: 100%;
    background-color: #cdcdcd;
}

.palette-footer {
    display: flex;
    align-items: center;
    gap: 5px;
    height: 44px;
    padding-top: 15px;
}

.palette-footer button {
    width: 38px;
    height: 28px;
    gap: 3px;
    border: 1px solid #ddd;
    border-radius: 3px;
}

/* Layout tabs and status bar */
.bottom-bar {
    flex: none;
    display: flex;
    justify-content: space-between;
    height: 59px;
    border-top: 1px solid #5b5b5b;
    background-color: #373737;
}

.layout-tabs {
    display: flex;
    gap: 4px;
    padding-left: 14px;
}

.layout-tab {
    width: 78px;
    height: 22px;
    border: 1px solid #4a4a4a;
    border-top: none;
    border-radius: 0 0 12px 12px / 0 0 22px 22px;
    background: linear-gradient(#4b4b4b, #646464);
    color: #b5b5b5;
}

.layout-tab.active {
    width: 72px;
    background: linear-gradient(#5b5b5b, #8b8b8b);
    color: #fff;
    font-weight: bold;
}

.layout-tab.add {
    width: 28px;
    border-radius: 12px 2px 12px 2px;
}

.status-bar {
    display: flex;
    align-self: flex-end;
    height: 34px;
    color: #c4c4c4;
}

.status-group {
    display: flex;
    border: 1px solid #7d7d7d;
    background-color: #4f4f4f;
}

.status-group.joined {
    border-left: none;
}

.status-group.spaced {
    margin-left: 1px;
}

.status-group button {
    width: 30px;
}

.status-group .arrow {
    width: 20px;
    color: #fff;
}

.status-group .model {
    width: 60px;
    color: #fff;
}

.status-group .scale {
    width: 42px;
    gap: 3px;
    color: #fff;
}

.status-group .on {
    color: #1e90ff;
}

/* Taskbar */
.taskbar {
    flex: none;
    display: flex;
    height: 49px;
    background: linear-gradient(90deg, #2a3d3c, #243536 50%, #1c3030 60%, #1a252a 80%);
}

.taskbar > button {
    width: 62px;
    height: 49px;
    border-top: 2px solid transparent;
    border-bottom: 2px solid transparent;
}

.taskbar > button:first-child, .taskbar > .task-view {
    width: 60px;
}

.taskbar > .task-view {
    margin-right: 3px;
}

.taskbar > .running {
    border-bottom-color: #76b9ed;
    margin: 0 6px;
    width: 50px;
}

.taskbar > .current {
    width: 62px;
    margin: 0;
    border-top-color: #53625f;
    background-color: #53625f;
}

.badged {
    position: relative;
}

.badge {
    position: absolute;
    right: 6px;
    bottom: 1px;
    width: 21px;
    height: 21px;
    border: 1px solid #aaa;
    border-radius: 50%;
    background-color: #2a3537;
    font-size: 15px;
    line-height: 18px;
    text-align: center;
}

.tile-letter {
    font-size: 14px;
    font-weight: bold;
    fill: #fff;
}

.tray {
    display: flex;
    margin-left: auto;
}

.tray button {
    width: 30px;
}

.clock {
    display: flex;
    flex-direction: column;
    align-items: center;
    width: 92px;
    padding-top: 2px;
    line-height: 23px;
}

.tray .action-center {
    width: 50px;
}

.action-center .badge {
    bottom: 4px;
}

.show-desktop {
    width: 5px;
    margin-left: 10px;
    border-left: 1px solid #6c7679;
}
```

FILE: script.js
```js
const layers = [
    "0", "2D", "2D PONTOS", "2D TRACEJADO", "3D ADUELAS", "3D ARM QUARTO",
    "3D CAIXILHOS", "3D COZINHA", "3D GUARDAS VIDRO", "3D PAREDES",
    "3D PASSAMAOS", "3D PAV IS PEDRA", "3D PAV MADEIRA", "3D PAV VAR CERAMICO",
    "3D PORTADAS", "3D PORTAS", "3D PUXADORES", "3D TECTOS", "3D VIDROS VAOS"
];
const currentLayer = "3D PAREDES";
const isoLayers = ["2D PONTOS", "2D TRACEJADO"];

function icon(id, width, height) {
    return `<svg width="${width}" height="${height}"><use href="#${id}"/></svg>`;
}

document.getElementById("layerRows").innerHTML = layers.map(name => {
    const current = name === currentLayer;
    return `
        <tr class="${current ? "selected" : ""}">
            <td class="status-cell">${current ? icon("i-check", 20, 16) : icon("i-status", 20, 10)}</td>
            <td>${name}</td>
            <td class="split icon-cell">${icon("i-bulb", 10, 17)}</td>
            <td class="icon-cell">${icon("i-sun", 18, 18)}</td>
            <td class="icon-cell">${icon("i-lock", 20, 18)}</td>
            <td><div class="cell-line"><span class="swatch ${current ? "red" : ""}"></span>${current ? "red" : "white"}</div></td>
            <td>${isoLayers.includes(name) ? "ACAD_IS..." : "Continu..."}</td>
            <td><div class="cell-line"><span class="weight-line"></span>Default</div></td>
            <td>0</td>
            <td class="plot-style">${current ? "Color_1" : "Color_7"}</td>
            <td class="icon-cell">${icon("i-plot", 14, 14)}</td>
            <td class="icon-cell">${icon("i-newvp", 17, 17)}</td>
            <td></td>
        </tr>`;
}).join("");

// Property palette sections, empty rows have no value to show
const empty = ["", ""];
const groups = [
    { title: "General", rows: Array(7).fill(empty) },
    { title: "3D", rows: [empty] },
    { title: "Plot", rows: Array(4).fill(empty) },
    { title: "View", rows: [empty, empty, empty, ["Height", "15.2494"], ["Width", "37.0811"]] },
    { title: "Misc", rows: [["Annotation scale", "1:1"], ["UCS icon On", "Yes"]] }
];

document.getElementById("propGroups").innerHTML = groups.map(group => `
    <div class="prop-group">
        <h3>${group.title}</h3>
        ${group.rows.map(row => `<div class="prop-row"><span>${row[0]}</span><span class="${group.title === "View" ? "readonly" : ""}">${row[1]}</span></div>`).join("")}
    </div>`).join("");
```
